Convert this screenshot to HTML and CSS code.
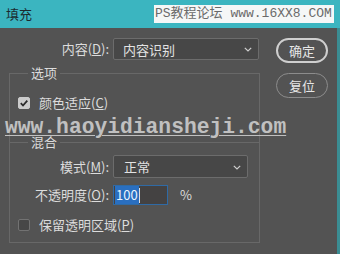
FILE: index.html
```html
<!DOCTYPE html>
<html lang="zh-CN">
<head>
<meta charset="utf-8">
<title>填充</title>
<link rel="stylesheet" href="styles.css">
</head>
<body>
<div class="titlebar">
  <span class="title">填充</span>
  <span class="wm-box">PS教程论坛 www.16XX8.COM</span>
</div>
<div class="body">
  <div class="main">
    <div class="row">
      <span class="lbl">内容(<u>D</u>):</span>
      <div class="select s-content"><span>内容识别</span><svg class="chev" width="8" height="5" viewBox="0 0 8 5"><polyline points="0.8,0.8 4,4 7.2,0.8" fill="none" stroke="#cfcfcf" stroke-width="1.2"/></svg></div>
    </div>
    <fieldset class="group opts">
      <legend>选项</legend>
      <label class="check"><span class="box on"><svg width="12" height="12" viewBox="0 0 12 12"><path d="M2.8 6.2 L5 8.5 L9.3 3.6" fill="none" stroke="#2a2a2a" stroke-width="1.8"/></svg></span>颜色适应(<u>C</u>)</label>
    </fieldset>
    <fieldset class="group blend">
      <legend>混合</legend>
      <div class="row">
        <span class="lbl2">模式(<u>M</u>):</span>
        <div class="select s-mode"><span>正常</span><svg class="chev" width="8" height="5" viewBox="0 0 8 5"><polyline points="0.8,0.8 4,4 7.2,0.8" fill="none" stroke="#cfcfcf" stroke-width="1.2"/></svg></div>
      </div>
      <div class="row r-op">
        <span class="lbl2">不透明度(<u>O</u>):</span>
        <div class="num"><span class="selected">100</span><span class="caret"></span></div>
        <span class="pct">%</span>
      </div>
      <label class="check c-keep"><span class="box"></span>保留透明区域(<u>P</u>)</label>
    </fieldset>
  </div>
  <div class="buttons">
    <button class="btn primary">确定</button>
    <button class="btn">复位</button>
  </div>
</div>
<div class="watermark">www.haoyidiansheji.com</div>
</body>
</html>
```
FILE: styles.css
```css
* { box-sizing: border-box; }
html, body { margin: 0; padding: 0; }
body {
  width: 340px;
  height: 254px;
  background: #535353;
  font-family: "Noto Sans CJK SC", "Noto Sans", sans-serif;
  font-size: 13px;
  color: #dcdcdc;
  position: relative;
  overflow: hidden;
}
u { text-decoration: underline; text-underline-offset: 1px; }

.titlebar {
  height: 28px;
  background: #3bb5c0;
  display: flex;
  align-items: center;
  justify-content: space-between;
  padding: 0 6px;
}
.title { color: #1b2a2f; font-size: 13px; line-height: 16px; }
.wm-box {
  width: 180px;
  height: 18px;
  background: #f5f7f7;
  color: #6a6a6a;
  font-family: "Liberation Mono", "Noto Sans CJK SC", monospace;
  font-size: 13px;
  line-height: 18px;
  padding-left: 1px;
  white-space: nowrap;
  overflow: hidden;
}

.body {
  display: flex;
  height: 226px;
  border-right: 3px solid #3a8d93;
}
.main {
  width: 251px;
  margin-left: 9px;
  padding-top: 10px;
}
.row { display: flex; align-items: center; gap: 4px; }
.lbl { width: 100px; text-align: right; line-height: 22px; }
.lbl2 { width: 91px; text-align: right; line-height: 20px; }

.select {
  display: flex;
  align-items: center;
  justify-content: space-between;
  background: #474747;
  border: 1px solid #6c6c6c;
  border-radius: 2px;
  color: #e2e2e2;
  padding: 0 6px 0 9px;
}
.s-content { width: 146px; height: 22px; }
.s-mode { width: 135px; height: 23px; padding-left: 10px; }
.chev { display: block; margin-top: 1px; }

.group {
  margin: 0;
  border: 1px solid #686868;
  padding: 13px 0 0 8px;
  min-width: 0;
}
.group legend {
  padding: 0 3px;
  margin-left: 10px;
  line-height: 16px;
  color: #dcdcdc;
}
.opts {
  margin-top: 5px;
  height: 77px;
  border-bottom: none;
}
.blend {
  margin-top: -8px;
  height: 109px;
  padding-top: 5px;
}

.check { display: flex; align-items: center; line-height: 17px; }
.box {
  width: 12px;
  height: 12px;
  border-radius: 2px;
  margin-right: 9px;
  background: #474747;
  border: 1px solid #727272;
  display: block;
}
.box.on { background: #cbcbcb; border-color: #cbcbcb; }
.box.on svg { display: block; margin: -1px; }
.c-keep { margin-top: 11px; }

.r-op { margin-top: 7px; }
.num {
  width: 55px;
  height: 20px;
  border: 1px solid #2f6aa5;
  background: #444242;
  display: flex;
  align-items: center;
  padding-left: 1px;
}
.selected {
  background: #2a6fc0;
  color: #e9f4ff;
  line-height: 18px;
  padding: 0 1px;
}
.caret { width: 1px; height: 15px; background: #e0e0e0; }
.pct { margin-left: 8px; line-height: 20px; }

.buttons {
  margin-left: 16px;
  padding-top: 10px;
  display: flex;
  flex-direction: column;
  gap: 10px;
}
.btn {
  width: 52px;
  height: 25px;
  border-radius: 13px;
  background: #535353;
  border: 1px solid #8c8c8c;
  color: #e6e6e6;
  font-family: "Noto Sans CJK SC", sans-serif;
  font-size: 13px;
  padding: 0;
  line-height: 23px;
}
.btn.primary { border: 2px solid #cfcfcf; line-height: 21px; }

.watermark {
  position: absolute;
  left: 5px;
  top: 115px;
  font-family: "Liberation Mono", monospace;
  font-weight: bold;
  font-size: 21.3px;
  line-height: 24px;
  color: #c0c0c0;
  text-decoration: underline;
  text-underline-offset: 2px;
  text-decoration-thickness: 1px;
  white-space: nowrap;
}
```
